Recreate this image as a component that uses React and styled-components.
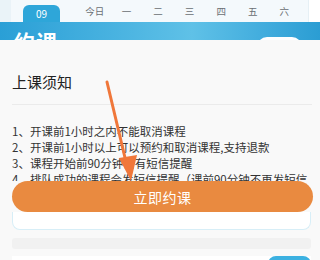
import React from "react";
import styled, { createGlobalStyle } from "styled-components";

const Global = createGlobalStyle`
  html, body { margin: 0; padding: 0; }
  body {
    width: 320px; height: 260px; overflow: hidden;
    font-family: "Noto Sans CJK SC", "Noto Sans", sans-serif;
    background: #ffffff;
  }
`;

const Page = styled.div`
  position: relative;
  width: 320px;
  height: 260px;
  overflow: hidden;
  display: flex;
  flex-direction: column;
`;

const WeekStrip = styled.div`
  flex-shrink: 0;
  height: 22px;
  background: linear-gradient(90deg, #eaf3f8 0, #eaf3f8 11px, #ffffff 309px);
  display: flex;
`;

const WeekBar = styled.div`
  margin-left: 11px;
  width: 298px;
  background: #f4f9fc;
  border-right: 1px solid #e6f0f5;
  display: flex;
  align-items: stretch;
  padding-left: 12px;
  box-sizing: border-box;
`;

const DateTab = styled.div`
  margin-top: 5px;
  width: 37px;
  height: 17px;
  background: #2ea6d9;
  border-radius: 6px 6px 0 0;
  color: #fff;
  font-size: 10px;
  line-height: 10px;
  display: flex;
  justify-content: center;
  padding-top: 4px;
  box-sizing: border-box;
  margin-right: 19px;
`;

const Day = styled.div`
  width: 31.6px;
  text-align: center;
  font-size: 9.5px;
  line-height: 22px;
  height: 22px;
  padding-bottom: 4px;
  box-sizing: border-box;
  color: #6a6f73;
`;

const Header = styled.div`
  flex-shrink: 0;
  height: 18px;
  overflow: hidden;
  background: linear-gradient(90deg, #2a9fd6 0%, #48b2e0 35%, #5fc1e7 60%, #3eaadc 85%, #2b9dd3 100%);
  display: flex;
  justify-content: space-between;
  align-items: flex-start;
  padding: 0 18px 0 14px;
`;

const HeaderTitle = styled.div`
  color: #fff;
  font-size: 21px;
  font-weight: 700;
  line-height: 21px;
  margin-top: 9px;
  letter-spacing: 1px;
`;

const HeaderPill = styled.div`
  margin-top: 15px;
  width: 45px;
  height: 20px;
  border-radius: 10px;
  background: #fdfeff;
`;

const Sheet = styled.div`
  flex: 1;
  min-height: 0;
  overflow: hidden;
  background: #f9f9f9;
  padding: 0 9px 0 12px;
  display: flex;
  flex-direction: column;
`;

const Title = styled.div`
  flex-shrink: 0;
  padding: 32px 0 12px;
  font-size: 15px;
  line-height: 20px;
  color: #222;
  border-bottom: 1px solid #ebebeb;
  margin-right: -1px;
`;

const Rules = styled.div`
  flex-shrink: 0;
  height: 76px;
  overflow: hidden;
  padding-top: 18px;
  box-sizing: border-box;
`;

const Rule = styled.div`
  font-size: 11.5px;
  line-height: 16px;
  color: #333;
  white-space: nowrap;
`;

const BookButton = styled.button`
  flex-shrink: 0;
  height: 31px;
  border: none;
  border-radius: 16px;
  background: #e98a40;
  color: #fff;
  font-family: inherit;
  font-size: 14px;
  letter-spacing: 0.5px;
  margin-right: -2px;
  padding: 0;
`;

const Card = styled.div`
  flex-shrink: 0;
  height: 17px;
  background: #fff;
  border: 1px solid #d7eef7;
  border-top: none;
  border-radius: 0 0 8px 8px;
`;

const GreyStrip = styled.div`
  flex-shrink: 0;
  margin-top: 8px;
  height: 11px;
  background: #f1f1f1;
  border-radius: 3px;
`;

const BottomRow = styled.div`
  flex-shrink: 0;
  margin-top: 7px;
  height: 20px;
  background: #fff;
  display: flex;
  justify-content: flex-end;
`;

const BluePill = styled.div`
  width: 43px;
  height: 20px;
  border-radius: 8px 8px 0 0;
  background: #3cb1e1;
`;

const Overlay = styled.svg`
  position: absolute;
  left: 0;
  top: 0;
  pointer-events: none;
`;

const days = ["今日", "一", "二", "三", "四", "五", "六"];
const rules = [
  "1、开课前1小时之内不能取消课程",
  "2、开课前1小时以上可以预约和取消课程,支持退款",
  "3、课程开始前90分钟会有短信提醒",
  "4、排队成功的课程会发短信提醒（课前90分钟不再发短信",
];

export default function App() {
  return (
    <>
      <Global />
      <Page>
        <WeekStrip>
          <WeekBar>
            <DateTab>09</DateTab>
            {days.map((d) => (
              <Day key={d}>{d}</Day>
            ))}
          </WeekBar>
        </WeekStrip>
        <Header>
          <HeaderTitle>约课</HeaderTitle>
          <HeaderPill />
        </Header>
        <Sheet>
          <Title>上课须知</Title>
          <Rules>
            {rules.map((r) => (
              <Rule key={r}>{r}</Rule>
            ))}
          </Rules>
          <BookButton>立即约课</BookButton>
          <Card />
          <GreyStrip />
          <BottomRow>
            <BluePill />
          </BottomRow>
        </Sheet>
        <Overlay width="320" height="260" viewBox="0 0 320 260">
          <line x1="107" y1="82" x2="126" y2="162" stroke="#f0773a" strokeWidth="3" strokeLinecap="round" />
          <polygon points="119,158 137,155 131,181" fill="#f0773a" />
        </Overlay>
      </Page>
    </>
  );
}
